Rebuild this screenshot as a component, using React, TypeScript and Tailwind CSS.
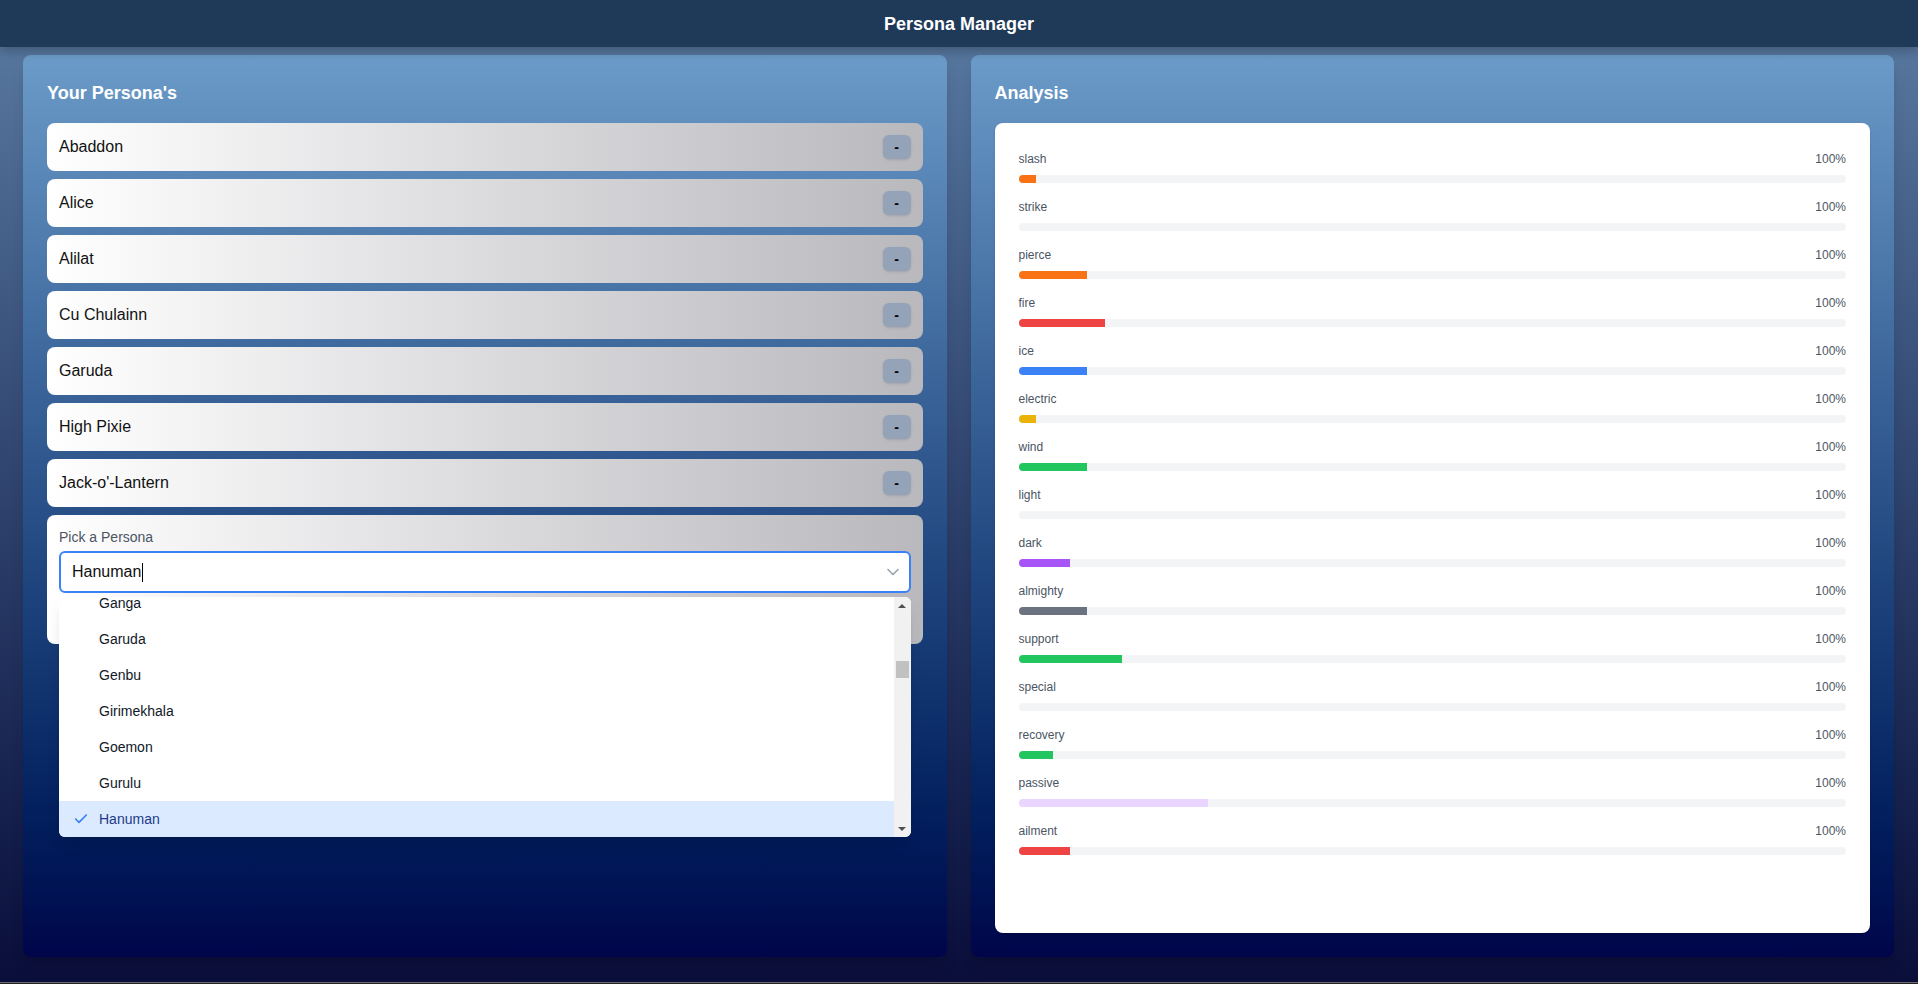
import { Check, ChevronDown } from 'lucide-react'

const personas = ['Abaddon', 'Alice', 'Alilat', 'Cu Chulainn', 'Garuda', 'High Pixie', "Jack-o'-Lantern"]

const options = ['Ganga', 'Garuda', 'Genbu', 'Girimekhala', 'Goemon', 'Gurulu', 'Hanuman']

const stats = [
  { name: 'slash', count: 1, color: 'bg-[#f97316]' },
  { name: 'strike', count: 0, color: 'bg-[#f97316]' },
  { name: 'pierce', count: 4, color: 'bg-[#f97316]' },
  { name: 'fire', count: 5, color: 'bg-[#ef4444]' },
  { name: 'ice', count: 4, color: 'bg-[#3b82f6]' },
  { name: 'electric', count: 1, color: 'bg-[#eab308]' },
  { name: 'wind', count: 4, color: 'bg-[#22c55e]' },
  { name: 'light', count: 0, color: 'bg-[#facc15]' },
  { name: 'dark', count: 3, color: 'bg-[#a855f7]' },
  { name: 'almighty', count: 4, color: 'bg-[#6b7280]' },
  { name: 'support', count: 6, color: 'bg-[#22c55e]' },
  { name: 'special', count: 0, color: 'bg-[#6b7280]' },
  { name: 'recovery', count: 2, color: 'bg-[#22c55e]' },
  { name: 'passive', count: 11, color: 'bg-[#e9d5ff]' },
  { name: 'ailment', count: 3, color: 'bg-[#ef4444]' },
]

function PersonaRow({ name }: { name: string }) {
  return (
    <div className="flex items-center justify-between rounded-lg bg-gradient-to-r from-white to-[#b9b8bd] px-3 py-3">
      <span className="text-base text-[#111]">{name}</span>
      <button className="flex h-6 w-7 items-center justify-center rounded-md bg-[#94a3b8] text-sm font-bold text-black shadow-sm">
        -
      </button>
    </div>
  )
}

function PersonaPicker() {
  return (
    <div className="relative rounded-lg bg-gradient-to-r from-white to-[#b9b8bd] p-3">
      <label className="mb-1 block text-sm leading-5 text-[#4b5563]">Pick a Persona</label>
      <div className="relative flex h-[42px] items-center rounded-md border-2 border-[#3b82f6] bg-white pl-[11px]">
        <span className="text-base text-[#111]">Hanuman</span>
        <span className="ml-px h-[19px] w-px bg-black" />
        <ChevronDown size={20} strokeWidth={2} className="absolute right-[6px] text-[#9ca3af]" />
      </div>
      <div className="mt-2 h-[31px]" />

      {/* open listbox */}
      <div className="absolute left-3 right-3 top-[82px] z-10 flex h-[240px] overflow-hidden rounded-md bg-white shadow-lg">
        <div className="flex-1 overflow-hidden">
          <ul className="-mt-3">
            {options.map((o) => {
              const selected = o === 'Hanuman'
              return (
                <li
                  key={o}
                  className={
                    selected
                      ? 'flex h-9 items-center bg-[#dbeafe] pl-[14px] text-sm text-[#1e3a8a]'
                      : 'flex h-9 items-center pl-[14px] text-sm text-[#111827]'
                  }
                >
                  {selected ? (
                    <Check size={16} strokeWidth={2.5} className="mr-[10px] text-[#3b82f6]" />
                  ) : (
                    <span className="mr-[10px] w-4" />
                  )}
                  {o}
                </li>
              )
            })}
          </ul>
        </div>
        <div className="flex w-[17px] flex-col bg-[#f1f1f1]">
          <div className="flex h-[17px] items-center justify-center">
            <div className="h-0 w-0 border-x-[4px] border-b-[4px] border-x-transparent border-b-[#505050]" />
          </div>
          <div className="flex-1 px-[2px] pt-[47px]">
            <div className="h-[17px] bg-[#c1c1c1]" />
          </div>
          <div className="flex h-[17px] items-center justify-center">
            <div className="h-0 w-0 border-x-[4px] border-t-[4px] border-x-transparent border-t-[#505050]" />
          </div>
        </div>
      </div>
    </div>
  )
}

function StatBar({ name, count, color }: { name: string; count: number; color: string }) {
  return (
    <div>
      <div className="flex justify-between text-xs leading-4 text-[#4b5563]">
        <span>{name}</span>
        <span>100%</span>
      </div>
      <div className="mt-2 h-2 overflow-hidden rounded-full bg-[#f3f4f6]">
        <div className={`h-full ${color}`} style={{ width: `${(count / 48) * 100}%` }} />
      </div>
    </div>
  )
}

export default function App() {
  return (
    <div
      className="flex h-[984px] flex-col bg-gradient-to-b from-[#5b7ca3] to-[#0a0d3a]"
      style={{ fontFamily: '"Liberation Sans", Arial, sans-serif' }}
    >
      <header className="relative z-10 flex h-[47px] items-center justify-center bg-[#1f3a59] shadow-[0_4px_10px_rgba(0,0,0,0.25)]">
        <h1 className="text-lg font-bold text-white">Persona Manager</h1>
      </header>

      <main className="grid flex-1 grid-cols-2 gap-6 pb-[25px] pl-[23px] pr-6 pt-2">
        <section className="rounded-lg bg-gradient-to-b from-[#6b9bc8] to-[#00054a] p-6 shadow-lg">
          <h2 className="mb-4 text-lg font-bold text-white">Your Persona's</h2>
          <div className="space-y-2">
            {personas.map((p) => (
              <PersonaRow key={p} name={p} />
            ))}
            <PersonaPicker />
          </div>
        </section>

        <section className="flex flex-col rounded-lg bg-gradient-to-b from-[#6b9bc8] to-[#00054a] p-6 shadow-lg">
          <h2 className="mb-4 text-lg font-bold text-white">Analysis</h2>
          <div className="flex-1 rounded-lg bg-white px-6 pt-7 shadow">
            <div className="space-y-4">
              {stats.map((s) => (
                <StatBar key={s.name} {...s} />
              ))}
            </div>
          </div>
        </section>
      </main>
      <div className="h-[2px] border-t border-[#6b6b6b] bg-[#222]" />
    </div>
  )
}
